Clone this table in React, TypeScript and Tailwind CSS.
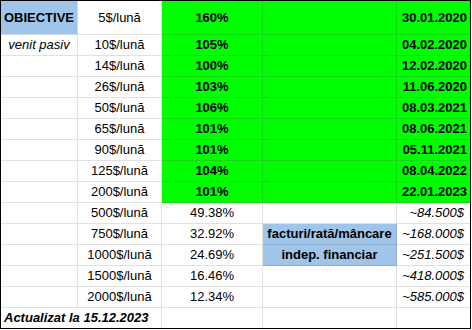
import React from "react";

type Row = { amount: string; pct: string; value: string; note?: string };

const green: Row[] = [
  { amount: "5$/lună", pct: "160%", value: "30.01.2020" },
  { amount: "10$/lună", pct: "105%", value: "04.02.2020" },
  { amount: "14$/lună", pct: "100%", value: "12.02.2020" },
  { amount: "26$/lună", pct: "103%", value: "11.06.2020" },
  { amount: "50$/lună", pct: "106%", value: "08.03.2021" },
  { amount: "65$/lună", pct: "101%", value: "08.06.2021" },
  { amount: "90$/lună", pct: "101%", value: "05.11.2021" },
  { amount: "125$/lună", pct: "104%", value: "08.04.2022" },
  { amount: "200$/lună", pct: "101%", value: "22.01.2023" },
];

const future: Row[] = [
  { amount: "500$/lună", pct: "49.38%", value: "~84.500$" },
  { amount: "750$/lună", pct: "32.92%", value: "~168.000$", note: "facturi/rată/mâncare" },
  { amount: "1000$/lună", pct: "24.69%", value: "~251.500$", note: "indep. financiar" },
  { amount: "1500$/lună", pct: "16.46%", value: "~418.000$" },
  { amount: "2000$/lună", pct: "12.34%", value: "~585.000$" },
];

const gray = "border-[#e1e1e1]";
const grn = "bg-[#00ff00] border-[#14d814]";

const App = () => {
  return (
    <div className="w-[472px] h-[330px] bg-white">
      <div
        className="w-[471px] h-[329px] border border-black grid grid-cols-[77px_84px_101px_134px_73px] grid-rows-[34px_repeat(13,21px)_20px] text-[13px] text-black"
        style={{ fontFamily: '"Liberation Sans", Arial, sans-serif' }}
      >
        {green.map((r, i) => (
          <React.Fragment key={r.amount}>
            {i === 0 ? (
              <div className="bg-[#9fc5e8] border-r border-b border-[#c9d9ea] flex items-center justify-center font-bold text-[13px]">
                OBIECTIVE
              </div>
            ) : (
              <div className={`border-r border-b ${gray} flex items-center justify-center italic`}>
                {i === 1 ? "venit pasiv" : ""}
              </div>
            )}
            <div className={`border-r border-b ${gray} flex items-center justify-center`}>{r.amount}</div>
            <div className={`border-r border-b ${grn} flex items-center justify-center font-bold`}>{r.pct}</div>
            <div className={`border-r border-b ${grn}`} />
            <div className={`border-b ${grn} flex items-center justify-end pr-[3px] font-bold`}>{r.value}</div>
          </React.Fragment>
        ))}
        {future.map((r) => (
          <React.Fragment key={r.amount}>
            <div className={`border-r border-b ${gray}`} />
            <div className={`border-r border-b ${gray} flex items-center justify-center`}>{r.amount}</div>
            <div className={`border-r border-b ${gray} flex items-center justify-center`}>{r.pct}</div>
            {r.note ? (
              <div className="bg-[#9fc5e8] border-r border-b border-[#8fadd0] flex items-center justify-center font-bold">
                {r.note}
              </div>
            ) : (
              <div className={`border-r border-b ${gray}`} />
            )}
            <div className={`border-b ${gray} flex items-center justify-end pr-[6px] italic`}>{r.value}</div>
          </React.Fragment>
        ))}
        <div className={`col-span-2 border-r ${gray} flex items-center pl-[3px] font-bold italic`}>
          Actualizat la 15.12.2023
        </div>
        <div className={`border-r ${gray}`} />
        <div className={`border-r ${gray}`} />
        <div />
      </div>
    </div>
  );
};

export default App;
